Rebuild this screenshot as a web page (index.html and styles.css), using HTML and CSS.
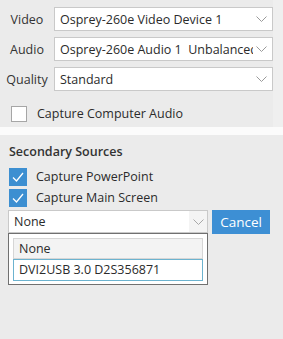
FILE: index.html
```html
<!DOCTYPE html>
<html>
<head>
<meta charset="utf-8">
<link rel="stylesheet" href="styles.css">
</head>
<body>
<div class="top">
  <div class="row">
    <span class="label">Video</span>
    <div class="select"><span class="val">Osprey-260e Video Device 1</span><svg class="chev" width="11" height="6" viewBox="0 0 11 6"><path d="M0.5 0.5 L5.5 5.5 L10.5 0.5" fill="none" stroke="#9a9a9a" stroke-width="1"/></svg></div>
  </div>
  <div class="row">
    <span class="label">Audio</span>
    <div class="select"><span class="val">Osprey-260e Audio 1&nbsp; Unbalanced</span><svg class="chev" width="11" height="6" viewBox="0 0 11 6"><path d="M0.5 0.5 L5.5 5.5 L10.5 0.5" fill="none" stroke="#9a9a9a" stroke-width="1"/></svg></div>
  </div>
  <div class="row">
    <span class="label">Quality</span>
    <div class="select"><span class="val">Standard</span><svg class="chev" width="11" height="6" viewBox="0 0 11 6"><path d="M0.5 0.5 L5.5 5.5 L10.5 0.5" fill="none" stroke="#9a9a9a" stroke-width="1"/></svg></div>
  </div>
  <div class="check-row plain">
    <span class="box"></span>
    <span class="ctext">Capture Computer Audio</span>
  </div>
</div>
<div class="band"></div>
<div class="bottom">
  <div class="heading">Secondary Sources</div>
  <div class="check-row blue">
    <span class="box"><svg width="18" height="18" viewBox="0 0 18 18"><path d="M4 9.5 L7.5 13 L14 5" fill="none" stroke="#fff" stroke-width="1.3"/></svg></span>
    <span class="ctext">Capture PowerPoint</span>
  </div>
  <div class="check-row blue">
    <span class="box"><svg width="18" height="18" viewBox="0 0 18 18"><path d="M4 9.5 L7.5 13 L14 5" fill="none" stroke="#fff" stroke-width="1.3"/></svg></span>
    <span class="ctext">Capture Main Screen</span>
  </div>
  <div class="src-row">
    <div class="src-wrap">
      <div class="src-select">
        <span class="val">None</span>
        <span class="arrow"><svg width="11" height="6" viewBox="0 0 11 6"><path d="M0.5 0.5 L5.5 5.5 L10.5 0.5" fill="none" stroke="#a8a8a8" stroke-width="1"/></svg></span>
      </div>
      <div class="menu">
        <div class="item item-none">None</div>
        <div class="item item-sel">DVI2USB 3.0 D2S356871</div>
      </div>
    </div>
    <button class="cancel">Cancel</button>
  </div>
</div>
</body>
</html>
```
FILE: styles.css
```css
html, body {
  margin: 0;
  padding: 0;
}
body {
  width: 283px;
  height: 339px;
  background: #ebebeb;
  font-family: "Open Sans", "Noto Sans", sans-serif;
  font-size: 12.5px;
  color: #2b2b2b;
  overflow: hidden;
}
.top {
  padding: 7px 0 0 0;
  height: 127px;
  box-sizing: border-box;
  border-right: 10px solid #efefef;
  width: 283px;
}
.row {
  display: flex;
  align-items: center;
  height: 24px;
  margin-bottom: 6px;
}
.label {
  width: 54px;
  text-align: center;
  flex: none;
  color: #333;
}
.select {
  flex: none;
  width: 219px;
  height: 24px;
  box-sizing: border-box;
  border: 1px solid #c9c9c9;
  background: #fff;
  display: flex;
  align-items: center;
  padding-left: 5px;
  padding-right: 5px;
}
.select .val {
  flex: 1;
  white-space: nowrap;
  overflow: hidden;
  min-width: 0;
}
.chev {
  flex: none;
  margin-left: 3px;
}
.check-row {
  display: flex;
  align-items: center;
}
.plain {
  margin-top: 14px;
  padding-left: 11px;
}
.plain .box {
  width: 16px;
  height: 16px;
  box-sizing: border-box;
  border: 1px solid #a6a6a6;
  background: #fff;
  margin-right: 10px;
}
.band {
  height: 8px;
  background: #fbfbfb;
}
.bottom {
  padding: 7px 0 0 9px;
}
.heading {
  font-weight: 600;
  color: #333;
  height: 20px;
  line-height: 20px;
  margin-bottom: 4px;
}
.blue {
  height: 21px;
}
.blue .box {
  width: 18px;
  height: 18px;
  background: #3d8fd1;
  margin-right: 9px;
  display: flex;
}
.src-row {
  display: flex;
  align-items: flex-start;
  margin-top: 2px;
  margin-left: -1px;
}
.src-wrap {
  width: 200px;
  position: relative;
}
.src-select {
  height: 23px;
  box-sizing: border-box;
  border: 1px solid #c9c9c9;
  background: #fff;
  display: flex;
  align-items: center;
}
.src-select .val {
  flex: 1;
  padding-left: 5px;
}
.src-select .arrow {
  width: 18px;
  height: 21px;
  background: #f4f4f4;
  display: flex;
  align-items: center;
  justify-content: center;
}
.menu {
  position: absolute;
  left: 0;
  top: 23px;
  width: 200px;
  box-sizing: border-box;
  border: 1px solid #707070;
  background: #fff;
  padding: 4px 4px 3px 4px;
}
.item {
  height: 21px;
  line-height: 21px;
  box-sizing: border-box;
  padding-left: 5px;
  white-space: nowrap;
}
.item-none {
  background: #f3f3f3;
  border: 1px solid #d6d6d6;
  line-height: 19px;
}
.item-sel {
  background: #fff;
  border: 1px solid #6cb3cf;
  line-height: 19px;
  height: 22px;
}
.cancel {
  margin-left: 4px;
  width: 58px;
  height: 24px;
  border: none;
  background: #3d8fd4;
  color: #fff;
  font-family: "Open Sans", "Noto Sans", sans-serif;
  font-size: 13.5px;
  padding: 0;
}
```
